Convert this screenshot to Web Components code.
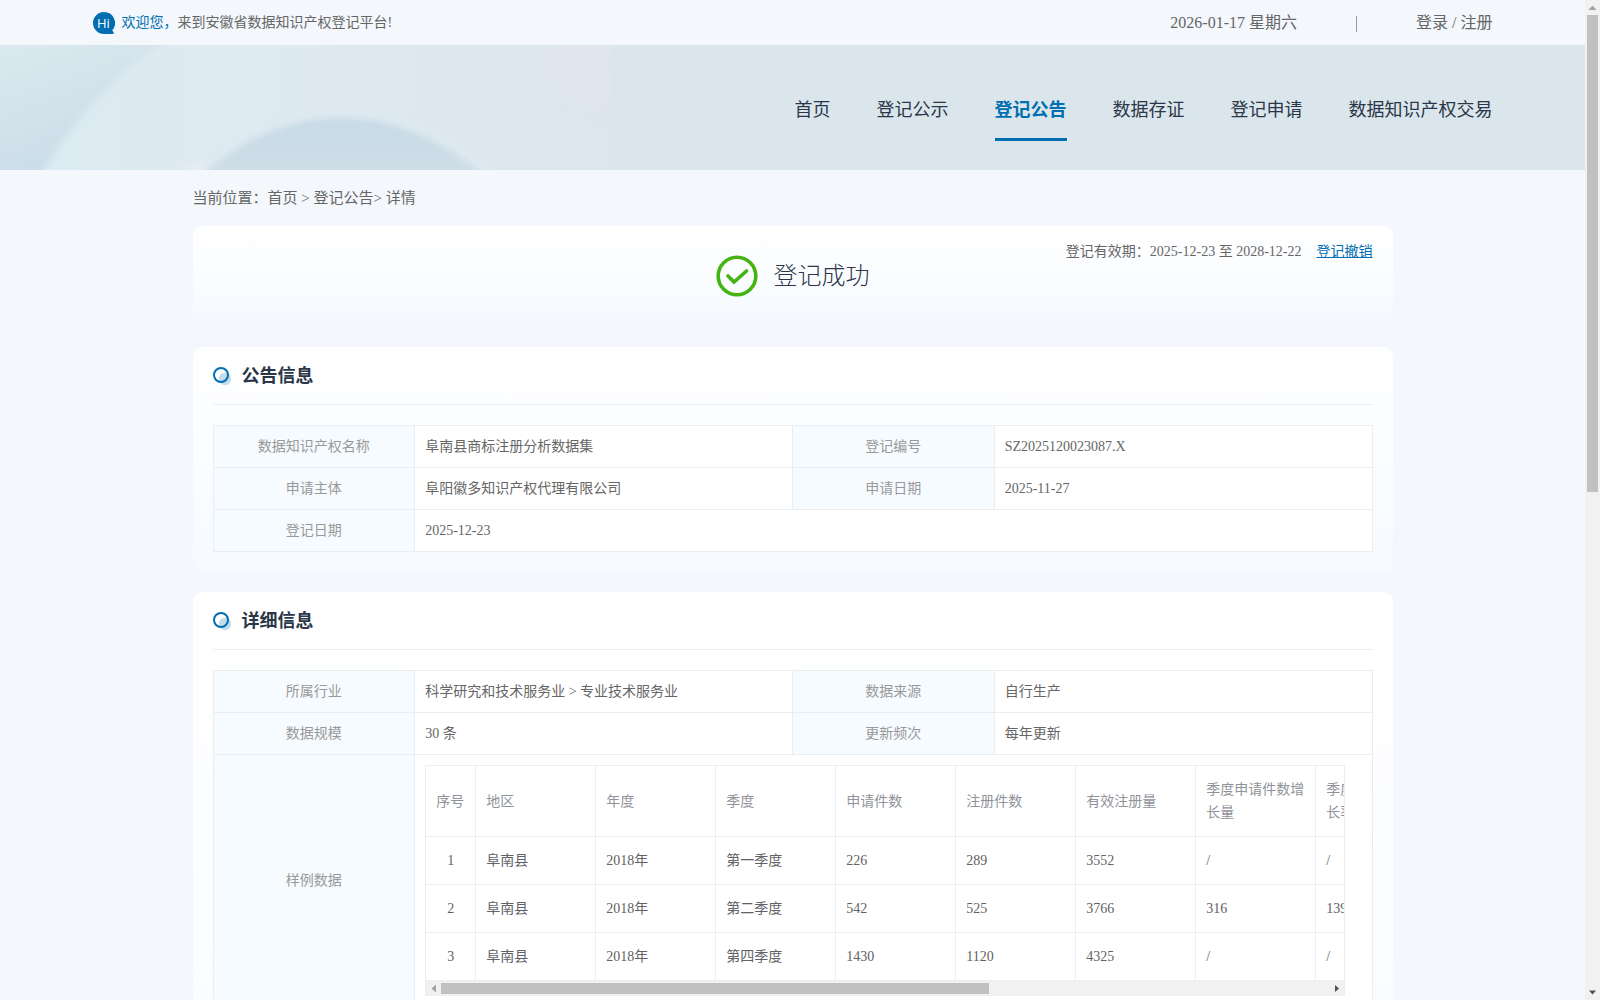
<!DOCTYPE html>
<html lang="zh-CN">
<head>
<meta charset="utf-8">
<title>安徽省数据知识产权登记平台</title>
<style>
  html, body { margin: 0; height: 100%; }
  body {
    --brand: #006eb0;
    --ink: #2b3648;
    --text: #666;
    --line: #ebeef0;
    --page: #f4f7fc;
    background: var(--page);
    color: var(--text);
    font: 14px/20px "Liberation Serif", "Noto Sans CJK SC", serif;
    overflow: hidden;
  }
</style>
</head>
<body>
<app-shell>
  <top-bar></top-bar>
  <site-banner></site-banner>
  <page-body>
    <crumb-trail></crumb-trail>
    <status-card></status-card>
    <info-card heading="公告信息">
      <info-table name="notice"></info-table>
    </info-card>
    <info-card heading="详细信息" tall>
      <info-table name="detail"></info-table>
    </info-card>
  </page-body>
</app-shell>

<script>
const define = (name, html, setup) => {
  const template = document.createElement('template');
  template.innerHTML = html;
  customElements.define(name, class extends HTMLElement {
    connectedCallback() {
      if (this.shadowRoot) return;
      const root = this.attachShadow({ mode: 'open' });
      root.append(template.content.cloneNode(true));
      if (setup) setup(this, root);
    }
  });
};

/* Scroll bar with arrow ends; "axis" picks the direction */
define('scroll-bar', `
  <style>
    :host { display: flex; background: #f1f1f1; box-sizing: border-box; }
    :host([axis="y"]) { flex-direction: column; width: 15px; }
    :host([axis="x"]) { height: 14px; }
    svg { flex: none; width: 15px; height: 15px; display: block; }
    :host([axis="x"]) svg { height: 14px; }
    .track { flex: 1; display: flex; flex-direction: inherit; }
    .thumb { background: #c1c1c1; }
    :host([axis="y"]) .thumb { height: var(--thumb); margin: 0 2px; }
    :host([axis="x"]) .thumb { width: var(--thumb); margin: 2px 0 1px; }
    .y, .x { display: none; }
    :host([axis="y"]) .y, :host([axis="x"]) .x { display: block; }
  </style>
  <svg class="y" viewBox="0 0 15 15"><path d="M3.5 10h8L7.500 5.500z" fill="#a3a3a3"/></svg>
  <svg class="x" viewBox="0 0 15 14"><path d="M10 3.500v8L5.500 7.500z" fill="#a3a3a3"/></svg>
  <div class="track"><div class="thumb"></div></div>
  <svg class="y" viewBox="0 0 15 15"><path d="M4 5.500h7L7.500 9.500z" fill="#505050"/></svg>
  <svg class="x" viewBox="0 0 15 14"><path d="M6 4v7l4-3.500z" fill="#505050"/></svg>
`);

define('app-shell', `
  <style>
    :host { display: flex; height: 100vh; }
    main { flex: 1; min-width: 0; overflow: auto; scrollbar-width: none; }
    scroll-bar { --thumb: 49.2%; }
  </style>
  <main><slot></slot></main>
  <scroll-bar axis="y"></scroll-bar>
`);

define('top-bar', `
  <style>
    :host { display: block; }
    .in { max-width: 1400px; height: 45px; margin: 0 auto; display: flex; align-items: center; }
    .hi { width: 22px; height: 22px; margin-right: 7px; }
    b { font-weight: 400; color: var(--brand); }
    .right { margin-left: auto; display: flex; align-items: center; font-size: 16px; }
    .bar { width: 1px; height: 16px; background: #999; margin: 3px 59px 0; }
    a { color: inherit; text-decoration: none; }
    text { font: 13px "Open Sans", sans-serif; fill: #fff; }
  </style>
  <div class="in">
    <svg class="hi" viewBox="0 0 22 22"><path d="M11 0a11 11 0 0 1 8.300 18.200q1.200 2.400 2 3.100-1 .700-3 .700H11A11 11 0 0 1 11 0z" fill="#006eb0"/><text x="4" y="16">Hi</text></svg>
    <span><b>欢迎您，</b>来到安徽省数据知识产权登记平台!</span>
    <div class="right">
      <span>2026-01-17 星期六</span><span class="bar"></span>
      <span><a href="#">登录</a> / <a href="#">注册</a></span>
    </div>
  </div>
`);

define('site-banner', `
  <style>
    :host { display: grid; background: #dbe6ec; height: 125px; overflow: hidden; }
    .art, .in { grid-area: 1 / 1; }
    .art { width: 612px; height: 125px; }
    .in { width: 100%; max-width: 1400px; margin: 0 auto; }
    nav { display: flex; justify-content: flex-end; gap: 46px; padding-top: 53px; }
    a { color: var(--ink); text-decoration: none; font-size: 18px; line-height: 24px; padding-bottom: 16px; border-bottom: 3px solid transparent; }
    a.on { color: var(--brand); font-weight: 700; border-color: var(--brand); }
  </style>
  <svg class="art" viewBox="0 0 612 125" preserveAspectRatio="none">
    <defs>
      <linearGradient id="base" x1="0" x2="1"><stop offset="0" stop-color="#dcecf2"/><stop offset=".5" stop-color="#deeaf0"/><stop offset="1" stop-color="#dce6ec"/></linearGradient>
      <linearGradient id="corner" x1="0" y1="0" x2=".45" y2="1"><stop offset="0" stop-color="#dcebf0"/><stop offset=".5" stop-color="#d4e3eb"/><stop offset="1" stop-color="#c6dbe8"/></linearGradient>
      <linearGradient id="dome" x1="0" y1="0" x2="0" y2="1"><stop offset="0" stop-color="#c7dae6"/><stop offset="1" stop-color="#d1e0e7"/></linearGradient>
      <radialGradient id="blush" cx="590" cy="20" r="80" gradientUnits="userSpaceOnUse"><stop offset="0" stop-color="#e0e5ec"/><stop offset="1" stop-color="#e0e5ec" stop-opacity="0"/></radialGradient>
      <filter id="soft" x="-10%" y="-10%" width="120%" height="120%"><feGaussianBlur stdDeviation="3"/></filter>
    </defs>
    <rect width="612" height="125" fill="url(#base)"/>
    <path d="M-20-20H192Q88 40 33 145H-20z" fill="url(#corner)" filter="url(#soft)"/>
    <path d="M170 145Q245 69 345 67Q440 71 510 145z" fill="#dfe9f1" filter="url(#soft)"/>
    <ellipse cx="194" cy="123" rx="10" ry="6" fill="#e6ebf2" filter="url(#soft)"/>
    <path d="M188 145Q255 72 345 73Q425 74 502 145z" fill="url(#dome)" filter="url(#soft)"/>
    <rect x="500" width="112" height="100" fill="url(#blush)"/>
  </svg>
  <div class="in"><nav>
    <a href="#">首页</a><a href="#">登记公示</a><a href="#" class="on">登记公告</a><a href="#">数据存证</a><a href="#">登记申请</a><a href="#">数据知识产权交易</a>
  </nav></div>
`);

define('page-body', `
  <style>:host { display: flex; flex-direction: column; gap: 20px; max-width: 1200px; margin: 0 auto; padding-bottom: 20px; }</style>
  <slot></slot>
`);

define('crumb-trail', `
  <style>
    :host { display: block; font-size: 15px; line-height: 20px; padding-top: 18px; margin-bottom: -2px; }
    a { color: inherit; text-decoration: none; }
  </style>
  <nav>当前位置：<a href="#">首页</a> &gt; <a href="#">登记公告</a>&gt; 详情</nav>
`);

define('status-card', `
  <style>
    :host { display: grid; grid-template-columns: 1fr auto 1fr; padding: 16px 20px 15px; border-radius: 10px; background: linear-gradient(#fff, #f8fbff 70%, #f4f8fd); }
    .state { grid-column: 2; display: flex; align-items: center; gap: 16px; padding: 13px 0 15px; color: var(--ink); font-size: 24px; line-height: 42px; font-weight: 300; }
    .state svg { width: 42px; height: 42px; }
    .term { justify-self: end; display: flex; gap: 15px; }
    a { color: var(--brand); }
  </style>
  <div class="state">
    <svg viewBox="0 0 42 42" fill="none" stroke="#43b411"><circle cx="21" cy="21" r="18.800" stroke-width="3.600"/><path d="M12 21l6 6L30.500 16" stroke-width="3.600" stroke-linecap="round"/></svg>
    <span>登记成功</span>
  </div>
  <div class="term"><span>登记有效期：2025-12-23 至 2028-12-22</span><a href="#">登记撤销</a></div>
`);

define('info-card', `
  <style>
    :host { display: block; padding: 0 20px 20px; border-radius: 10px; background: linear-gradient(#fff, #f6faff); }
    :host([tall]) { background: linear-gradient(#fff, #fafcff); }
    header { display: flex; align-items: center; gap: 11px; height: 57px; border-bottom: 1px solid var(--line); margin-bottom: 20px; }
    h2 { margin: 0; color: var(--ink); font-size: 18px; line-height: 24px; }
    svg { width: 18px; height: 20px; }
  </style>
  <header>
    <svg viewBox="0 0 18 20"><circle cx="12" cy="13" r="6.200" fill="#c5dced"/><circle cx="8" cy="9" r="7" fill="none" stroke="#006eb0" stroke-width="2"/></svg>
    <h2></h2>
  </header>
  <slot></slot>
`, (host, root) => { root.querySelector('h2').textContent = host.getAttribute('heading'); });

const tables = {
  notice: `
    <tr><th>数据知识产权名称</th><td>阜南县商标注册分析数据集</td><th>登记编号</th><td>SZ2025120023087.X</td></tr>
    <tr><th>申请主体</th><td>阜阳徽多知识产权代理有限公司</td><th>申请日期</th><td>2025-11-27</td></tr>
    <tr><th>登记日期</th><td colspan="3">2025-12-23</td></tr>`,
  detail: `
    <tr><th>所属行业</th><td>科学研究和技术服务业 &gt; 专业技术服务业</td><th>数据来源</th><td>自行生产</td></tr>
    <tr><th>数据规模</th><td>30 条</td><th>更新频次</th><td>每年更新</td></tr>
    <tr><th>样例数据</th><td colspan="3"><sample-grid></sample-grid></td></tr>`
};

define('info-table', `
  <style>
    :host { display: block; }
    table { width: 100%; border-collapse: collapse; table-layout: fixed; font: inherit; }
    th, td { border: 1px solid var(--line); padding: 10px; line-height: 21px; }
    th { background: #f6fbff; color: #999; font-weight: 400; text-align: center; }
    td { background: #fff; }
    .k { width: 17.4%; }
  </style>
  <table><colgroup><col class="k"><col><col class="k"><col></colgroup><tbody></tbody></table>
`, (host, root) => { root.querySelector('tbody').innerHTML = tables[host.getAttribute('name')]; });

const heads = ['序号', '地区', '年度', '季度', '申请件数', '注册件数', '有效注册量', '季度申请件数增长量', '季度申请件数增长率'];
const rows = [
  ['1', '阜南县', '2018年', '第一季度', '226', '289', '3552', '/', '/'],
  ['2', '阜南县', '2018年', '第二季度', '542', '525', '3766', '316', '139.82%'],
  ['3', '阜南县', '2018年', '第四季度', '1430', '1120', '4325', '/', '/']
];

define('sample-grid', `
  <style>
    :host { display: block; margin-right: 17px; border: 1px solid #ebeef5; overflow: hidden; }
    .view { overflow: hidden; }
    table { width: 1010px; table-layout: fixed; border-collapse: separate; border-spacing: 0; }
    col:first-child { width: 50px; }
    th, td { padding: 12px 10px; line-height: 23px; text-align: left; border: solid #ebeef5; border-width: 0 1px 1px 0; color: #606266; }
    th { color: #909399; font-weight: 400; }
    td:first-child { text-align: center; }
    th:first-child { white-space: nowrap; }
    scroll-bar { --thumb: 61.7%; }
  </style>
  <div class="view"><table>
    <colgroup>${heads.map(() => '<col>').join('')}</colgroup>
    <thead><tr>${heads.map(h => `<th>${h}</th>`).join('')}</tr></thead>
    <tbody>${rows.map(r => `<tr>${r.map(c => `<td>${c}</td>`).join('')}</tr>`).join('')}</tbody>
  </table></div>
  <scroll-bar axis="x"></scroll-bar>
`);
</script>
</body>
</html>
